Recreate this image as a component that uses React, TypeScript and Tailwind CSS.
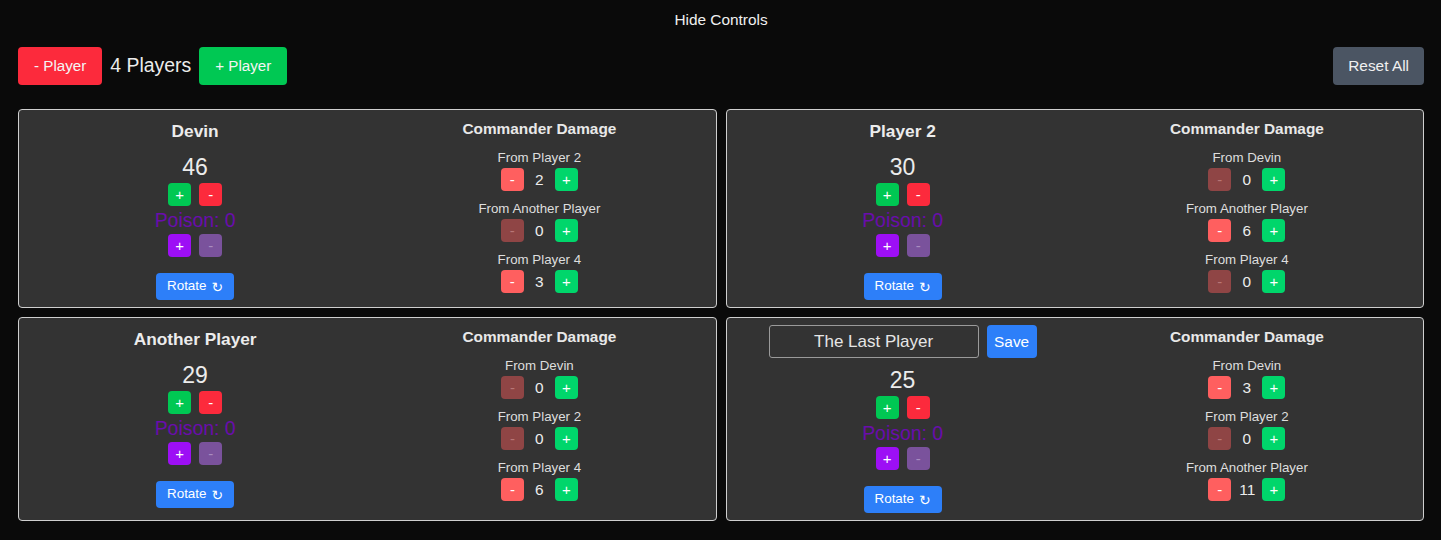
import { useState } from "react";

type Damage = { from: string; value: number };
type Player = {
  name: string;
  life: number;
  poison: number;
  damage: Damage[];
  editing?: boolean;
};

const initialPlayers: Player[] = [
  {
    name: "Devin",
    life: 46,
    poison: 0,
    damage: [
      { from: "Player 2", value: 2 },
      { from: "Another Player", value: 0 },
      { from: "Player 4", value: 3 },
    ],
  },
  {
    name: "Player 2",
    life: 30,
    poison: 0,
    damage: [
      { from: "Devin", value: 0 },
      { from: "Another Player", value: 6 },
      { from: "Player 4", value: 0 },
    ],
  },
  {
    name: "Another Player",
    life: 29,
    poison: 0,
    damage: [
      { from: "Devin", value: 0 },
      { from: "Player 2", value: 0 },
      { from: "Player 4", value: 6 },
    ],
  },
  {
    name: "The Last Player",
    life: 25,
    poison: 0,
    editing: true,
    damage: [
      { from: "Devin", value: 3 },
      { from: "Player 2", value: 0 },
      { from: "Another Player", value: 11 },
    ],
  },
];

function SmallButton({
  label,
  className,
  disabled,
}: {
  label: string;
  className: string;
  disabled?: boolean;
}) {
  return (
    <button
      disabled={disabled}
      className={`h-[23px] w-[23px] rounded-[4px] flex items-center justify-center text-[15px] leading-none ${className}`}
    >
      {label}
    </button>
  );
}

function PlayerCard({ player }: { player: Player }) {
  const [name, setName] = useState(player.name);

  return (
    <div className="flex border border-[#cfcfcf] rounded-[4px] bg-[#333333] px-[4px] py-[7px]">
      {/* Life / poison */}
      <div className="flex-1 flex flex-col items-center">
        {player.editing ? (
          <div className="flex items-center gap-2 h-[33px]">
            <input
              value={name}
              onChange={(e) => setName(e.target.value)}
              className="w-[210px] h-[33px] rounded-[3px] border border-[#9a9a9a] bg-transparent text-center text-[17px] text-[#e6e6e6] focus:outline-none"
            />
            <button className="h-[33px] w-[50px] rounded-[4px] bg-[#2d7ff9] text-white text-[15.4px]">
              Save
            </button>
          </div>
        ) : (
          <h2 className="h-[28px] leading-[28px] text-[17.3px] font-bold text-[#ececec]">
            {player.name}
          </h2>
        )}
        <div className="mt-[6px] leading-[32px] text-[23px] text-[#ececec]">{player.life}</div>
        <div className="flex gap-2">
          <SmallButton label="+" className="bg-[#00c853] text-white" />
          <SmallButton label="-" className="bg-[#fc2a3c] text-white" />
        </div>
        <div className="leading-[28px] text-[19.4px] text-[#6a0dad]">Poison: {player.poison}</div>
        <div className="flex gap-2">
          <SmallButton label="+" className="bg-[#9d0ff5] text-white" />
          <SmallButton label="-" className="bg-[#7a529c] text-[#a98cc0]" disabled />
        </div>
        <button className="mt-[16px] h-[27px] w-[78px] rounded-[4px] bg-[#2d7ff9] text-white text-[13.4px] flex items-center justify-center gap-[5px]">
          Rotate <span className="font-['DejaVu_Sans'] text-[14px] leading-none">↻</span>
        </button>
      </div>

      {/* Commander damage */}
      <div className="flex-1 flex flex-col items-center">
        <h3 className="h-[24px] leading-[24px] text-[15.4px] font-bold text-[#e8e8e8]">
          Commander Damage
        </h3>
        <div className="mt-[9px] flex flex-col gap-[10px]">
          {player.damage.map((d) => (
            <div key={d.from} className="flex flex-col items-center">
              <div className="leading-[16px] text-[13.3px] text-[#dedede]">From {d.from}</div>
              <div className="mt-[2px] flex items-center gap-2">
                {d.value === 0 ? (
                  <SmallButton label="-" className="bg-[#8f4545] text-[#b87676]" disabled />
                ) : (
                  <SmallButton label="-" className="bg-[#ff5f5f] text-white" />
                )}
                <span className="w-[15px] text-center text-[15.4px] text-[#ececec]">{d.value}</span>
                <SmallButton label="+" className="bg-[#00d66b] text-white" />
              </div>
            </div>
          ))}
        </div>
      </div>
    </div>
  );
}

export default function App() {
  const [players] = useState(initialPlayers);

  return (
    <div className="min-h-[540px] bg-[#0a0a0a] font-['Liberation_Sans',Arial,sans-serif] pl-[18px] pr-[17px]">
      <div className="flex justify-center pt-[11px]">
        <button className="leading-[18px] text-[15.4px] text-[#f0f0f0]">Hide Controls</button>
      </div>

      {/* Controls */}
      <div className="mt-[18px] flex items-center justify-between">
        <div className="flex items-center gap-2">
          <button className="h-[38px] px-4 rounded-[4px] bg-[#fc2a3c] text-[15.2px] text-[#f4f4f4]">
            - Player
          </button>
          <span className="text-[19.4px] text-[#ececec]">{players.length} Players</span>
          <button className="h-[38px] px-4 rounded-[4px] bg-[#00c853] text-[15.2px] text-[#f4f4f4]">
            + Player
          </button>
        </div>
        <button className="h-[38px] px-[15px] rounded-[4px] bg-[#4b5563] text-[15.4px] text-[#f0f0f0]">
          Reset All
        </button>
      </div>

      {/* Player grid */}
      <div className="mt-[24px] grid grid-cols-2 gap-[9px]">
        {players.map((p) => (
          <PlayerCard key={p.name} player={p} />
        ))}
      </div>
    </div>
  );
}
